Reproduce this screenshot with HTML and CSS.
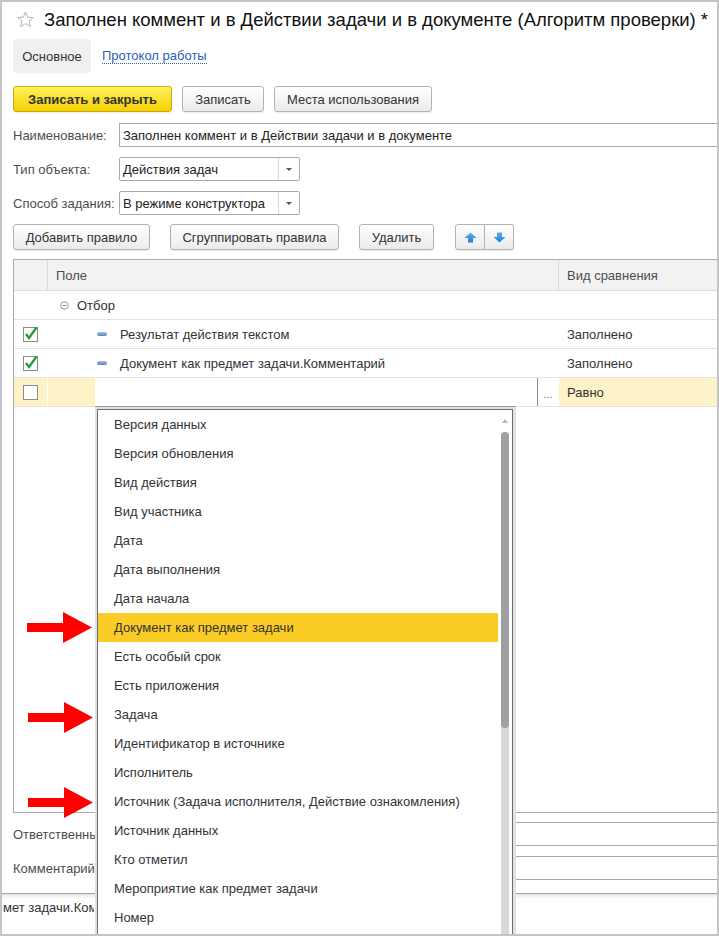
FILE: index.html
```html
<!DOCTYPE html>
<html lang="ru">
<head>
<meta charset="utf-8">
<title>Алгоритм проверки</title>
<link rel="stylesheet" href="styles.css">
</head>
<body>
<div class="window">
  <div class="title">
    <svg class="star" viewBox="0 0 17 17"><polygon points="8.5,1 10.7,6.2 16.2,6.5 12,10 13.4,15.6 8.5,12.6 3.6,15.6 5,10 0.8,6.5 6.3,6.2" fill="none" stroke="#b4b4b4" stroke-width="1"/></svg>
    <span class="title-text">Заполнен коммент и в Действии задачи и в документе (Алгоритм проверки) *</span>
  </div>
  <div class="content">
    <div class="tabs">
      <span class="tab">Основное</span>
      <span class="tab-link">Протокол работы</span>
    </div>
    <div class="toolbar">
      <button class="btn btn-primary w-save-close">Записать и закрыть</button>
      <button class="btn w-save">Записать</button>
      <button class="btn w-usage">Места использования</button>
    </div>
    <div class="form">
      <div class="field">
        <span class="field-label">Наименование:</span>
        <div class="input">Заполнен коммент и в Действии задачи и в документе</div>
      </div>
      <div class="field">
        <span class="field-label">Тип объекта:</span>
        <div class="select"><span class="select-value">Действия задач</span><span class="select-btn"><span class="tri"></span></span></div>
      </div>
      <div class="field">
        <span class="field-label">Способ задания:</span>
        <div class="select"><span class="select-value">В режиме конструктора</span><span class="select-btn"><span class="tri"></span></span></div>
      </div>
    </div>
    <div class="toolbar toolbar2">
      <button class="btn w-add">Добавить правило</button>
      <button class="btn w-group">Сгруппировать правила</button>
      <button class="btn w-del">Удалить</button>
      <div class="btn-group">
        <button class="btn btn-icon"><svg width="13" height="11" viewBox="0 0 13 11"><defs><linearGradient id="gu" x1="0" y1="0" x2="0" y2="1"><stop offset="0" stop-color="#5fb0f0"/><stop offset="1" stop-color="#1f7fd6"/></linearGradient></defs><polygon points="6.5,0.5 12.5,6 9,6 9,10.5 4,10.5 4,6 0.5,6" fill="url(#gu)"/></svg></button>
        <button class="btn btn-icon"><svg width="13" height="11" viewBox="0 0 13 11"><defs><linearGradient id="gd" x1="0" y1="0" x2="0" y2="1"><stop offset="0" stop-color="#5fb0f0"/><stop offset="1" stop-color="#1f7fd6"/></linearGradient></defs><polygon points="4,0.5 9,0.5 9,5 12.5,5 6.5,10.5 0.5,5 4,5" fill="url(#gd)"/></svg></button>
      </div>
    </div>
    <div class="grid">
      <div class="grid-row grid-head">
        <div class="cell"></div>
        <div class="cell cell-pad">Поле</div>
        <div class="cell cell-last">Вид сравнения</div>
      </div>
      <div class="grid-row">
        <div class="cell"></div>
        <div class="cell cell-group"><svg class="collapse" width="9" height="9" viewBox="0 0 9 9"><circle cx="4.5" cy="4.5" r="3.8" fill="none" stroke="#9a9a9a"/><line x1="2.5" y1="4.5" x2="6.5" y2="4.5" stroke="#8a8a8a"/></svg><span>Отбор</span></div>
        <div class="cell cell-last"></div>
      </div>
      <div class="grid-row">
        <div class="cell cell-check"><svg width="17" height="17" viewBox="0 0 17 17"><rect x="0.5" y="2.5" width="14" height="14" fill="#fff" stroke="#8c8c8c"/><polyline points="3,9 6,13 13.5,2.5" fill="none" stroke="#1f9e3e" stroke-width="2.3"/></svg></div>
        <div class="cell cell-item"><span class="dash"></span><span>Результат действия текстом</span></div>
        <div class="cell cell-last">Заполнено</div>
      </div>
      <div class="grid-row">
        <div class="cell cell-check"><svg width="17" height="17" viewBox="0 0 17 17"><rect x="0.5" y="2.5" width="14" height="14" fill="#fff" stroke="#8c8c8c"/><polyline points="3,9 6,13 13.5,2.5" fill="none" stroke="#1f9e3e" stroke-width="2.3"/></svg></div>
        <div class="cell cell-item"><span class="dash"></span><span>Документ как предмет задачи.Комментарий</span></div>
        <div class="cell cell-last">Заполнено</div>
      </div>
      <div class="grid-row row-current">
        <div class="cell cell-check cell-yellow"><svg width="17" height="17" viewBox="0 0 17 17"><rect x="0.5" y="2.5" width="14" height="14" fill="#fff" stroke="#8c8c8c"/></svg></div>
        <div class="cell cell-edit"><span class="edit-indent"></span><span class="editor"></span><span class="dots">...</span></div>
        <div class="cell cell-last cell-yellow">Равно</div>
      </div>
    </div>
    <div class="form form2">
      <div class="field">
        <span class="field-label field-label-clip">Ответственный:</span>
        <div class="input"></div>
      </div>
      <div class="field">
        <span class="field-label field-label-clip">Комментарий:</span>
        <div class="input"></div>
      </div>
    </div>
  </div>
  <div class="status"><span class="status-text">мет задачи.Комментарий</span></div>

  <div class="popup">
    <div class="list">
      <div class="items">
        <div class="item">Версия данных</div>
        <div class="item">Версия обновления</div>
        <div class="item">Вид действия</div>
        <div class="item">Вид участника</div>
        <div class="item">Дата</div>
        <div class="item">Дата выполнения</div>
        <div class="item">Дата начала</div>
        <div class="item item-sel">Документ как предмет задачи</div>
        <div class="item">Есть особый срок</div>
        <div class="item">Есть приложения</div>
        <div class="item">Задача</div>
        <div class="item">Идентификатор в источнике</div>
        <div class="item">Исполнитель</div>
        <div class="item">Источник (Задача исполнителя, Действие ознакомления)</div>
        <div class="item">Источник данных</div>
        <div class="item">Кто отметил</div>
        <div class="item">Мероприятие как предмет задачи</div>
        <div class="item">Номер</div>
      </div>
      <div class="scroll">
        <span class="scroll-up"></span>
        <span class="scroll-track"></span>
        <span class="scroll-thumb"></span>
      </div>
    </div>
  </div>

  <svg class="arrow arrow-1" width="66" height="31" viewBox="0 0 66 31"><rect x="0" y="11" width="37" height="9" fill="#ff0000"/><polygon points="36,0 65,15.5 36,31" fill="#ff0000"/></svg>
  <svg class="arrow arrow-2" width="66" height="31" viewBox="0 0 66 31"><rect x="0" y="11" width="37" height="9" fill="#ff0000"/><polygon points="36,0 65,15.5 36,31" fill="#ff0000"/></svg>
  <svg class="arrow arrow-3" width="66" height="31" viewBox="0 0 66 31"><rect x="0" y="11" width="37" height="9" fill="#ff0000"/><polygon points="36,0 65,15.5 36,31" fill="#ff0000"/></svg>
</div>
</body>
</html>
```

FILE: styles.css
```css
* { box-sizing: border-box; }
html, body { margin: 0; padding: 0; }
body {
  width: 719px;
  height: 936px;
  overflow: hidden;
  background: #fff;
  font-family: "Liberation Sans", Arial, sans-serif;
  font-size: 13px;
  color: #4d4d4d;
}
.window {
  position: relative;
  width: 719px;
  height: 936px;
  border: 2px solid #c4c4c4;
  overflow: hidden;
  background: #fff;
}
.title {
  display: flex;
  align-items: center;
  height: 35px;
  padding-left: 15px;
}
.star { width: 17px; height: 17px; flex: none; }
.title-text {
  margin-left: 10px;
  font-size: 18.5px;
  color: #111;
  white-space: nowrap;
}
.content { padding-left: 11px; }
.tabs {
  display: flex;
  align-items: center;
  margin-top: 2px;
  height: 34px;
}
.tab {
  height: 34px;
  width: 78px;
  background: #f0f0f0;
  border-radius: 3px;
  display: flex;
  align-items: center;
  justify-content: center;
  color: #333;
}
.tab-link {
  margin-left: 11px;
  color: #2b62b5;
  border-bottom: 1px dotted #2b62b5;
  line-height: 14px;
}
.toolbar {
  display: flex;
  gap: 10px;
  margin-top: 13px;
  height: 26px;
}
.btn {
  height: 26px;
  padding: 0;
  font: inherit;
  color: #333;
  background: linear-gradient(#ffffff, #ebebeb);
  border: 1px solid #b3b3b3;
  border-radius: 3px;
  box-shadow: 0 1px 1px rgba(0, 0, 0, 0.08);
  display: flex;
  align-items: center;
  justify-content: center;
  white-space: nowrap;
}
.btn-primary {
  background: linear-gradient(#fff15a, #f4d000);
  border-color: #c9a90c;
  font-weight: bold;
}
.w-save-close { width: 159px; }
.w-save { width: 82px; }
.w-usage { width: 158px; }
.form {
  margin-top: 11px;
  display: flex;
  flex-direction: column;
  gap: 10px;
}
.field {
  display: flex;
  align-items: center;
  height: 24px;
}
.field-label {
  width: 106px;
  flex: none;
  white-space: nowrap;
  overflow: hidden;
}
.field-label-clip { width: 82px; margin-right: 24px; }
.input {
  flex: 1;
  height: 24px;
  border: 1px solid #a9a9a9;
  border-right: none;
  padding-left: 3px;
  display: flex;
  align-items: center;
  color: #222;
  white-space: nowrap;
}
.select {
  width: 181px;
  flex: none;
  height: 24px;
  border: 1px solid #a9a9a9;
  border-radius: 2px;
  display: flex;
}
.select-value {
  flex: 1;
  padding-left: 3px;
  display: flex;
  align-items: center;
  color: #222;
  white-space: nowrap;
}
.select-btn {
  width: 21px;
  border-left: 1px solid #d6d6d6;
  display: flex;
  align-items: center;
  justify-content: center;
}
.tri {
  width: 0;
  height: 0;
  border-left: 3px solid transparent;
  border-right: 3px solid transparent;
  border-top: 3px solid #555;
}
.toolbar2 { gap: 20px; margin-top: 9px; }
.w-add { width: 137px; }
.w-group { width: 169px; }
.w-del { width: 75px; }
.btn-group { display: flex; margin-left: 1px; }
.btn-icon { width: 30px; }
.btn-group .btn-icon:first-child { border-radius: 3px 0 0 3px; }
.btn-group .btn-icon:last-child { border-radius: 0 3px 3px 0; border-left: none; width: 29px; }

.grid {
  margin-top: 9px;
  height: 554px;
  border: 1px solid #aaaaaa;
  border-right: none;
}
.grid-row {
  display: grid;
  grid-template-columns: 34px 511px 1fr;
  height: 29px;
  border-bottom: 1px solid #e3e3e3;
  color: #333;
}
.grid-head {
  height: 31px;
  background: #f2f2f2;
  border-bottom: 1px solid #dcdcdc;
  color: #4d4d4d;
}
.cell {
  border-right: 1px solid #fff;
  display: flex;
  align-items: center;
  white-space: nowrap;
  overflow: hidden;
}
.grid-head .cell { border-right-color: #dcdcdc; }
.cell-pad { padding-left: 8px; }
.cell-last { border-right: none; padding-left: 8px; }
.cell-group { padding-left: 12px; }
.collapse { margin-right: 8px; flex: none; }
.cell-check { padding-left: 9px; padding-bottom: 2px; }
.cell-item { padding-left: 49px; }
.dash {
  width: 10px;
  height: 4px;
  border-radius: 2px;
  background: linear-gradient(#a6bfdf, #5a82b8);
  margin-right: 13px;
  flex: none;
}
.cell-yellow { background: #fef2c8; }
.cell-edit { align-items: stretch; }
.edit-indent { width: 47px; background: #fef2c8; flex: none; }
.editor { width: 442px; background: #fff; flex: none; }
.dots {
  width: 21px;
  flex: none;
  border-left: 1px solid #8c8c8c;
  background: #fff;
  color: #777;
  font-size: 11px;
  display: flex;
  align-items: center;
  justify-content: center;
  padding-top: 3px;
}

.form2 { margin-top: 9px; }

.status {
  margin-top: 13px;
  height: 60px;
  border-top: 1px solid #a2a2a2;
  background: linear-gradient(#e6e6e6, #ffffff 5px);
  padding: 6px 0 0 1px;
  line-height: 16px;
  color: #333;
}
.status-text {
  display: block;
  width: 91px;
  overflow: hidden;
  white-space: nowrap;
}

.popup {
  position: absolute;
  left: 93px;
  top: 404px;
  width: 421px;
  height: 540px;
  background: #e1e1e1;
  border-top: 1px solid #9c9c9c;
  padding: 2px 3px 0 2px;
}
.list {
  height: 100%;
  background: #fff;
  border: 1px solid #6e6e6e;
  border-bottom: none;
  display: flex;
}
.items { width: 400px; flex: none; }
.item {
  height: 29px;
  padding-left: 16px;
  display: flex;
  align-items: center;
  color: #333;
  white-space: nowrap;
}
.item-sel { background: #fbcc25; }
.scroll { width: 14px; flex: none; position: relative; }
.scroll-up {
  position: absolute;
  left: 4px;
  top: 9px;
  width: 0;
  height: 0;
  border-left: 3px solid transparent;
  border-right: 3px solid transparent;
  border-bottom: 4px solid #b8b8b8;
}
.scroll-track {
  position: absolute;
  left: 3px;
  top: 22px;
  width: 8px;
  bottom: 0;
  background: #d7d7d7;
  border-radius: 4px 4px 0 0;
}
.scroll-thumb {
  position: absolute;
  left: 3px;
  top: 22px;
  width: 8px;
  height: 296px;
  background: #a0a0a0;
  border-radius: 4px;
}

.arrow { position: absolute; }
.arrow-1 { left: 25px; top: 610px; }
.arrow-2 { left: 26px; top: 700px; }
.arrow-3 { left: 26px; top: 785px; }
```
